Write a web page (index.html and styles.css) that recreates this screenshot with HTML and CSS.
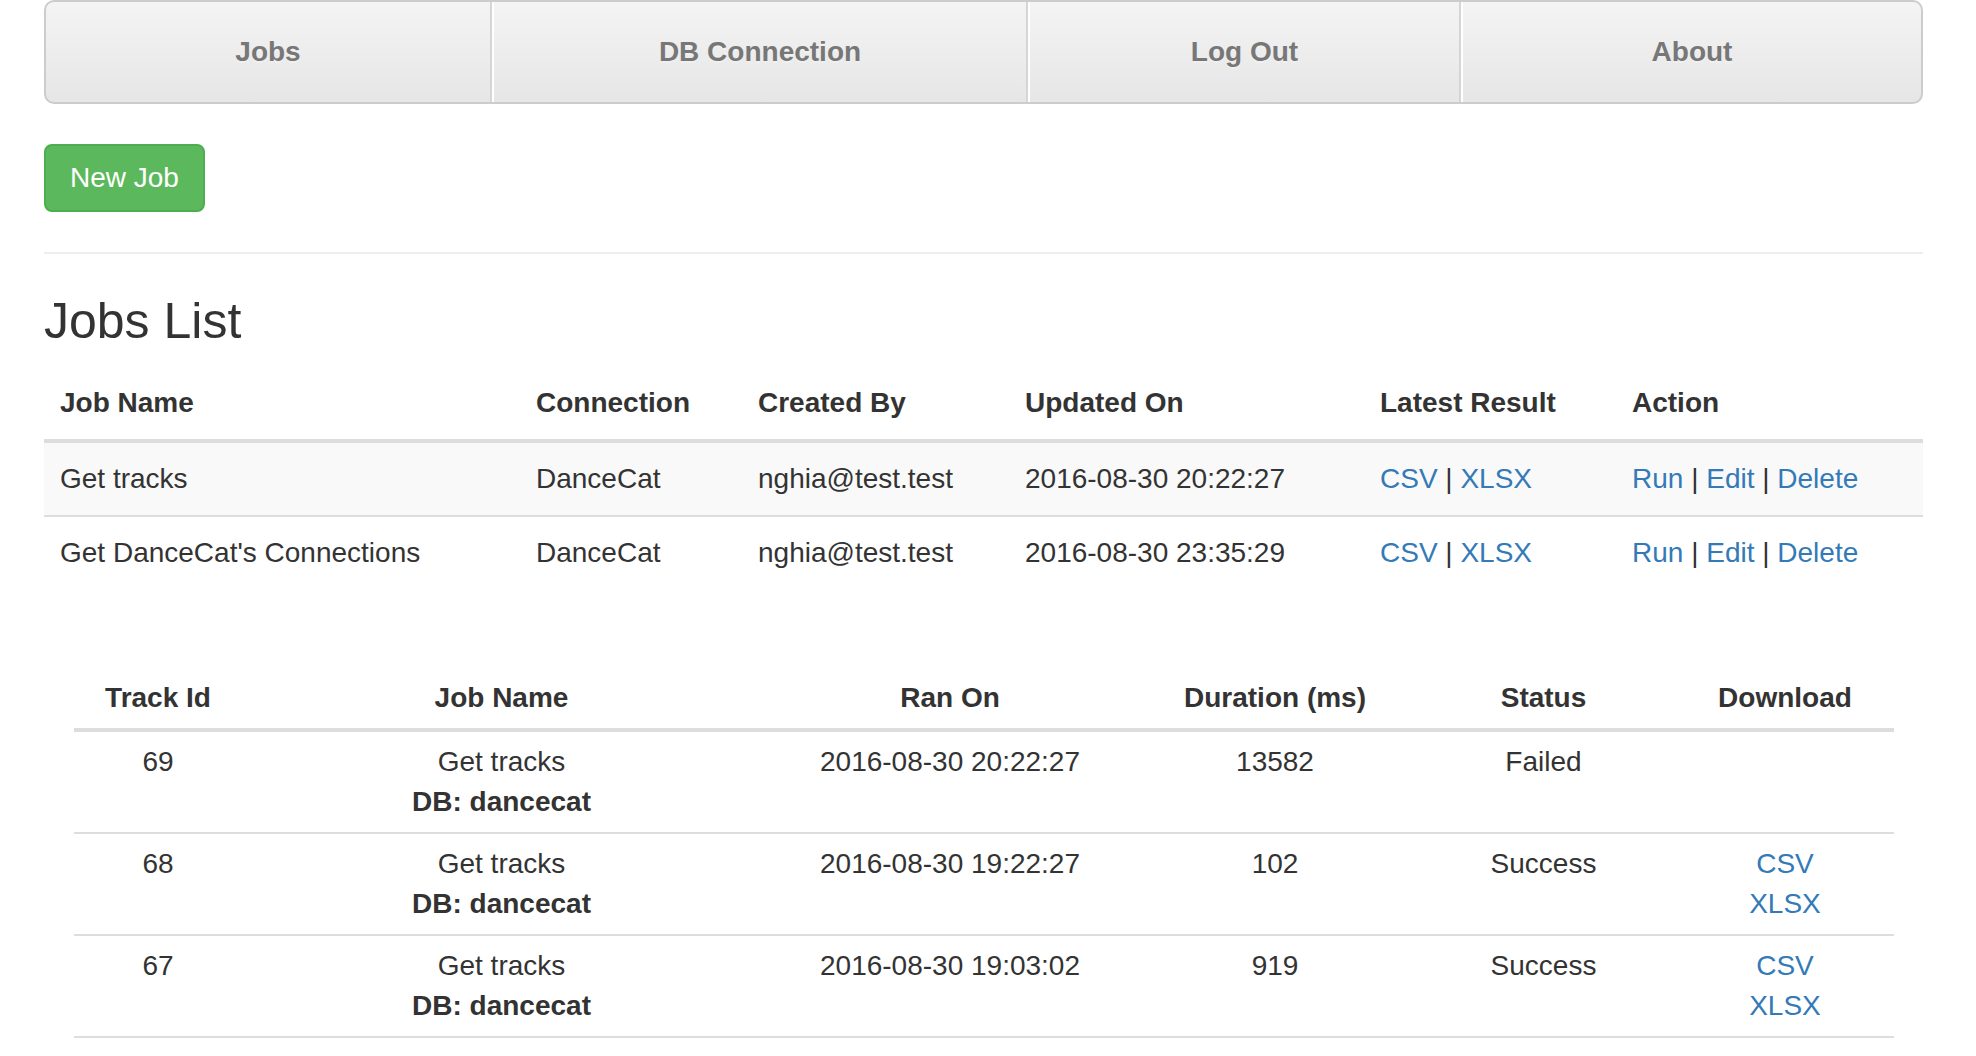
FILE: index.html
```html
<!DOCTYPE html>
<html lang="en">
<head>
<meta charset="utf-8">
<title>DanceCat - Jobs</title>
<link rel="stylesheet" href="styles.css">
</head>
<body>
<div class="page">
  <nav class="topnav">
    <a class="topnav-item" href="#">Jobs</a>
    <a class="topnav-item" href="#">DB Connection</a>
    <a class="topnav-item" href="#">Log Out</a>
    <a class="topnav-item" href="#">About</a>
  </nav>

  <a class="btn-success" href="#">New Job</a>

  <hr class="divider">

  <h3 class="title">Jobs List</h3>

  <table class="jobs">
    <thead>
      <tr>
        <th class="c-name">Job Name</th>
        <th class="c-conn">Connection</th>
        <th class="c-by">Created By</th>
        <th class="c-upd">Updated On</th>
        <th class="c-res">Latest Result</th>
        <th class="c-act">Action</th>
      </tr>
    </thead>
    <tbody>
      <tr class="striped">
        <td>Get tracks</td>
        <td>DanceCat</td>
        <td>nghia@test.test</td>
        <td>2016-08-30 20:22:27</td>
        <td><a href="#">CSV</a> | <a href="#">XLSX</a></td>
        <td><a href="#">Run</a> | <a href="#">Edit</a> | <a href="#">Delete</a></td>
      </tr>
      <tr>
        <td>Get DanceCat's Connections</td>
        <td>DanceCat</td>
        <td>nghia@test.test</td>
        <td>2016-08-30 23:35:29</td>
        <td><a href="#">CSV</a> | <a href="#">XLSX</a></td>
        <td><a href="#">Run</a> | <a href="#">Edit</a> | <a href="#">Delete</a></td>
      </tr>
    </tbody>
  </table>

  <div class="history">
    <table class="runs">
      <thead>
        <tr>
          <th class="r-id">Track Id</th>
          <th class="r-name">Job Name</th>
          <th class="r-ran">Ran On</th>
          <th class="r-dur">Duration (ms)</th>
          <th class="r-status">Status</th>
          <th class="r-dl">Download</th>
        </tr>
      </thead>
      <tbody>
        <tr>
          <td>69</td>
          <td>Get tracks<br><strong>DB: dancecat</strong></td>
          <td>2016-08-30 20:22:27</td>
          <td>13582</td>
          <td>Failed</td>
          <td></td>
        </tr>
        <tr>
          <td>68</td>
          <td>Get tracks<br><strong>DB: dancecat</strong></td>
          <td>2016-08-30 19:22:27</td>
          <td>102</td>
          <td>Success</td>
          <td><a class="dl" href="#">CSV</a><a class="dl" href="#">XLSX</a></td>
        </tr>
        <tr class="last">
          <td>67</td>
          <td>Get tracks<br><strong>DB: dancecat</strong></td>
          <td>2016-08-30 19:03:02</td>
          <td>919</td>
          <td>Success</td>
          <td><a class="dl" href="#">CSV</a><a class="dl" href="#">XLSX</a></td>
        </tr>
      </tbody>
    </table>
  </div>
</div>
</body>
</html>
```

FILE: styles.css
```css
html, body {
  margin: 0;
  padding: 0;
  background: #fff;
}

body {
  font-family: "Liberation Sans", Arial, Helvetica, sans-serif;
  font-size: 28px;
  line-height: 40px;
  color: #333;
}

a {
  color: #337ab7;
  text-decoration: none;
}

.page {
  width: 1879px;
  margin-left: 44px;
}

/* top navigation */
.topnav {
  display: grid;
  grid-template-columns: 446px 536px 433px 460px;
  border: 2px solid #ccc;
  border-radius: 10px;
  background: linear-gradient(to bottom, #f4f4f4 0%, #e6e6e6 100%);
  overflow: hidden;
}

.topnav-item {
  display: block;
  height: 100px;
  line-height: 100px;
  text-align: center;
  font-weight: bold;
  color: #777;
  text-shadow: 0 2px 0 rgba(255, 255, 255, 0.25);
  border-left: 2px solid #fff;
  border-right: 2px solid #d5d5d5;
}

.topnav-item:first-child {
  border-left: 0;
}

.topnav-item:last-child {
  border-right: 0;
}

/* button */
.btn-success {
  display: inline-block;
  margin-top: 40px;
  padding: 12px 24px;
  line-height: 40px;
  font-size: 28px;
  color: #fff;
  background: #5cb85c;
  border: 2px solid #4cae4c;
  border-radius: 8px;
}

.divider {
  margin: 40px 0;
  border: 0;
  border-top: 2px solid #eee;
  height: 0;
}

.title {
  margin: 0 0 19px;
  padding-top: 1px;
  font-size: 50px;
  line-height: 53px;
  font-weight: normal;
  color: #333;
}

/* tables */
table {
  border-collapse: collapse;
  border-spacing: 0;
  table-layout: fixed;
}

.jobs {
  width: 1879px;
}

.jobs th,
.jobs td {
  padding: 16px;
  text-align: left;
  vertical-align: top;
  white-space: nowrap;
}

.jobs th {
  vertical-align: bottom;
  font-weight: bold;
  border-bottom: 4px solid #ddd;
}

.jobs td {
  border-top: 2px solid #ddd;
}

.jobs .striped td {
  background: #f9f9f9;
}

.c-name { width: 444px; }
.c-conn { width: 190px; }
.c-by { width: 235px; }
.c-upd { width: 323px; }
.c-res { width: 220px; }
.c-act { width: 275px; }

.history {
  padding: 79px 30px 0;
}

.runs {
  width: 1820px;
}

.runs th,
.runs td {
  padding: 10px;
  text-align: center;
  vertical-align: top;
  white-space: nowrap;
}

.runs th {
  vertical-align: bottom;
  font-weight: bold;
  border-bottom: 4px solid #ddd;
}

.runs td {
  border-top: 2px solid #ddd;
}

.runs .last td {
  border-bottom: 2px solid #ddd;
}

.runs strong {
  font-weight: bold;
}

.r-id { width: 148px; }
.r-name { width: 499px; }
.r-ran { width: 358px; }
.r-dur { width: 252px; }
.r-status { width: 245px; }
.r-dl { width: 198px; }

.dl {
  display: block;
}
```
